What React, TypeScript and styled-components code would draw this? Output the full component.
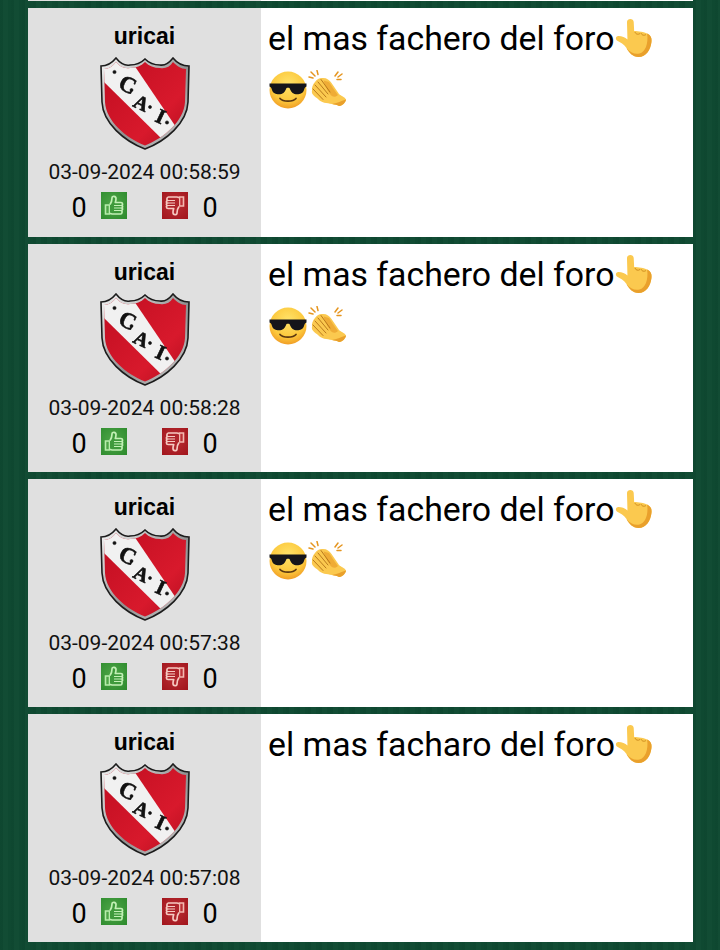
import { createGlobalStyle, styled } from "styled-components";

const GlobalStyle = createGlobalStyle`
  html, body {
    margin: 0;
    padding: 0;
    background-color: #0f4a32;
  }
`;

const Page = styled.div`
  width: 720px;
  height: 950px;
  overflow: hidden;
  box-sizing: border-box;
  padding: 0 27px 0 28px;
  display: flex;
  flex-direction: column;
  gap: 7px;
  background-color: #0f4a32;
  background-image: repeating-linear-gradient(90deg, rgba(0, 0, 0, 0.035) 0 3px, rgba(255, 255, 255, 0.012) 3px 8px, rgba(0, 0, 0, 0.015) 8px 11px);
  font-family: Roboto, "Liberation Sans", sans-serif;
  color: #000;
`;

const PrevCardEdge = styled.div`
  height: 1px;
  flex: none;
  background: linear-gradient(90deg, #e0e0e0 233px, #fff 233px);
`;

const Card = styled.article`
  flex: none;
  height: 228px;
  display: flex;
  background: #fff;

  &:nth-child(2) {
    height: 229px;
  }
`;

const Author = styled.aside`
  width: 233px;
  flex: none;
  box-sizing: border-box;
  padding-top: 16px;
  display: flex;
  flex-direction: column;
  align-items: center;
  background: #e0e0e0;
`;

const Username = styled.div`
  font-family: "Liberation Sans", Arial, sans-serif;
  font-size: 23px;
  font-weight: 700;
  line-height: 25px;
`;

const Crest = styled.svg`
  display: block;
  margin-top: 8px;
  width: 90px;
  height: 93px;
  filter: blur(0.35px);
`;

const Stamp = styled.div`
  margin-top: 9px;
  font-size: 21px;
  line-height: 27px;
  color: #111;
`;

const Votes = styled.div`
  margin-top: 7px;
  display: flex;
  align-items: center;
  gap: 14px;
`;

const Count = styled.span`
  font-size: 27px;
  line-height: 30px;
  width: 16px;
  text-align: center;
`;

const VoteGap = styled.span`
  width: 7px;
`;

const VoteTile = styled.svg`
  display: block;
  width: 26px;
  height: 27px;
  margin-top: -5px;
  filter: blur(0.4px);
`;

const Message = styled.div`
  flex: 1;
  box-sizing: border-box;
  padding: 5px 7px 0;
  font-size: 33.8px;
  line-height: 52px;
`;

const Emoji = styled.svg`
  display: inline-block;
  width: 40px;
  height: 40px;
  vertical-align: -8px;
`;

const Crest1 = () => (
  <Crest viewBox="0 0 90 93">
    <defs>
      <linearGradient id="silver" x1="0" y1="0" x2="1" y2="1">
        <stop offset="0" stopColor="#f6f6f6" />
        <stop offset="0.55" stopColor="#8f8f8f" />
        <stop offset="1" stopColor="#cfcfcf" />
      </linearGradient>
      <linearGradient id="crestRed" x1="0" y1="0" x2="1" y2="1">
        <stop offset="0" stopColor="#bf0d20" />
        <stop offset="0.65" stopColor="#d8192c" />
        <stop offset="1" stopColor="#ae0c1d" />
      </linearGradient>
      <clipPath id="crestInner">
        <path d="M4 12C9 12 13 9 16 5C20 10 25 12 30 11C36 11 41 9 45 5C49 9 54 11 60 11C65 12 70 10 73 5C77 9 81 12 86 12L85 45C84 64 64 81 45 88.5C26 81 6 64 5 45Z" />
      </clipPath>
    </defs>
    <path
      d="M1 9C7 9 12 6 16 1C20 6 25 9 30 8C35 8 41 6 45 2C49 6 55 8 60 8C65 9 69 6 73 1C77 6 83 9 89 9L88 45C87 66 66 84 45 92C24 84 3 66 2 45Z"
      fill="url(#silver)"
      stroke="#1c1c1c"
      strokeWidth="1.6"
    />
    <g clipPath="url(#crestInner)">
      <rect width="90" height="93" fill="url(#crestRed)" />
      <path d="M-4 14L14 -4L34 8L78 73L66 86L4 25Z" fill="#f1f1f1" />
    </g>
    <g fontFamily="'Liberation Serif', serif" fontWeight="700" fill="#111" stroke="#111" strokeWidth="0.6">
      <text x="17" y="31" fontSize="23" transform="rotate(25 17 31)">C</text>
      <text x="32" y="49" fontSize="20" transform="rotate(25 32 49)">A</text>
      <text x="54" y="64" fontSize="21" transform="rotate(25 54 64)">I</text>
      <circle cx="14.5" cy="15" r="1.6" />
      <circle cx="31.5" cy="33" r="1.5" />
      <circle cx="50" cy="50" r="1.5" />
      <circle cx="67" cy="65.5" r="1.6" />
    </g>
  </Crest>
);

const ThumbUp = () => (
  <VoteTile viewBox="0 0 26 27">
    <defs>
      <radialGradient id="upBg" cx="0.45" cy="0.45" r="0.75">
        <stop offset="0" stopColor="#4fa548" />
        <stop offset="1" stopColor="#2d8b2d" />
      </radialGradient>
    </defs>
    <rect width="26" height="27" fill="url(#upBg)" />
    <path d="M4.5 13H8.5V22H4.5Z" fill="#4fa548" stroke="#b7ecab" strokeWidth="1.6" />
    <path
      d="M9 12.5C10.5 10.5 11 8 11 6C11 3.5 15 3.8 15 6.5C15 8.5 14.5 9.5 14.3 10.5H20C22 10.5 22 13.5 20.5 13.5C22 13.5 22 16 20.5 16C22 16 22 18.5 20.2 18.5C21.5 18.5 21.5 22 19.5 22H11C10 22 9.5 21.5 9 21.2"
      fill="#3f9a3c"
      stroke="#c2f0b5"
      strokeWidth="1.7"
      strokeLinejoin="round"
    />
    <path d="M13 13.5H20M13 16H20M13 18.5H20" stroke="#c2f0b5" strokeWidth="1.1" />
  </VoteTile>
);

const ThumbDown = () => (
  <VoteTile viewBox="0 0 26 27">
    <defs>
      <radialGradient id="downBg" cx="0.5" cy="0.45" r="0.75">
        <stop offset="0" stopColor="#bb3036" />
        <stop offset="1" stopColor="#a0141b" />
      </radialGradient>
    </defs>
    <rect width="26" height="27" fill="url(#downBg)" />
    <path d="M21.5 14H17.5V5H21.5Z" fill="#bb3036" stroke="#f3b8b0" strokeWidth="1.6" />
    <path
      d="M17 14.5C15.5 16.5 15 19 15 21C15 23.5 11 23.2 11 20.5C11 18.5 11.5 17.5 11.7 16.5H6C4 16.5 4 13.5 5.5 13.5C4 13.5 4 11 5.5 11C4 11 4 8.5 5.8 8.5C4.5 8.5 4.5 5 6.5 5H15C16 5 16.5 5.5 17 5.8"
      fill="#b0262c"
      stroke="#f6c9c1"
      strokeWidth="1.7"
      strokeLinejoin="round"
    />
    <path d="M6 8.5H13M6 11H13M6 13.5H13" stroke="#f6c9c1" strokeWidth="1.1" />
  </VoteTile>
);

const skin = "#fbc94f";
const skinDark = "#e9a02c";

const PointUp = () => (
  <Emoji viewBox="1 0 40 40">
    <path
      d="M13 4C13 0 20 0 20 4L20.5 13C25 13 31 14 34 15.5C38 17.5 39 20 38.5 24C37.5 32 33 39 25 39C19 39 15 34.5 12.5 30C10 26 6 24.5 2.5 22.5C0.5 21 1.5 18 4 18C8 18 11 19.5 13.5 21.5Z"
      fill={skin}
      transform="translate(0.5 0) scale(0.96 1)"
    />
    <path
      d="M34 15.5C38 17.5 39 20 38.5 24C37.5 32 33 39 25 39C19 39 15 34.5 12.5 30C16 34.5 21 36.5 26 35.5C32 34 35.5 26 34 15.5Z"
      fill={skinDark}
      transform="translate(0.5 0) scale(0.96 1)"
    />
    <path d="M21 14C21.5 16 24 17 26 15.5M27 15C27.5 17 30 18 32 16.5" fill="none" stroke="#c98618" strokeWidth="0.9" />
  </Emoji>
);

const CoolFace = () => (
  <Emoji viewBox="0 0 40 40">
    <defs>
      <radialGradient id="coolBg" cx="0.5" cy="0.35" r="0.7">
        <stop offset="0" stopColor="#ffe36a" />
        <stop offset="0.65" stopColor="#fcc83c" />
        <stop offset="1" stopColor="#ee9320" />
      </radialGradient>
    </defs>
    <circle cx="20" cy="20" r="18.5" fill="url(#coolBg)" />
    <path
      d="M1.5 13.5H38.5V16.5C37 17 36.5 18 36 20C35 24 30 25 26.5 24C23.5 23 22.5 20 21.5 18C20.5 17.5 19.5 17.5 18.5 18C17.5 20 16.5 23 13.5 24C10 25 5 24 4 20C3.5 18 3 17 1.5 16.5Z"
      fill="#15151a"
    />
    <path d="M12 28.5C15 32 25 32 28 28.5" fill="none" stroke="#5b3710" strokeWidth="1.7" strokeLinecap="round" />
  </Emoji>
);

const Clap = () => (
  <Emoji viewBox="0 0 40 40">
    <path d="M3 2L7 6M9 0.5L10 4.5M1 7L5 8M30 2L27 6M34 4L30 7M33 9.5L29 9.5" stroke="#e5951f" strokeWidth="1.5" strokeLinecap="round" />
    <path
      d="M7 12C9 9 12 7.5 15 8C19 8 21.5 10 23.5 13L31 24C33 26 37 27 38 29.5C38 32 34 36.5 31 36C29 35 27 34.5 24 34C19 33 13 33 10 29C7 26.5 3 24.5 4 20.5C3.5 17.5 5 14 7 12Z"
      fill={skin}
    />
    <path
      d="M21 12C23 15 26 20 30 25C27 28 24 27 22 24C19 20 17 16 15.5 10.5"
      fill={skinDark}
      opacity="0.7"
    />
    <path
      d="M10 12L20 24M7 15L18 27M5 19L15 29.5M13 9.5L22 22"
      fill="none"
      stroke="#b9791c"
      strokeWidth="1"
      strokeLinecap="round"
    />
    <path d="M24 34C28 33.5 33 31 38 29.5C38 32 34 36.5 31 36C29 35 27 34.5 24 34Z" fill={skinDark} />
  </Emoji>
);

const posts = [
  { stamp: "03-09-2024 00:58:59", text: "el mas fachero del foro", extra: true },
  { stamp: "03-09-2024 00:58:28", text: "el mas fachero del foro", extra: true },
  { stamp: "03-09-2024 00:57:38", text: "el mas fachero del foro", extra: true },
  { stamp: "03-09-2024 00:57:08", text: "el mas facharo del foro", extra: false },
];

export default function App() {
  return (
    <>
      <GlobalStyle />
      <Page>
        <PrevCardEdge />
        {posts.map((post) => (
          <Card key={post.stamp}>
            <Author>
              <Username>uricai</Username>
              <Crest1 />
              <Stamp>{post.stamp}</Stamp>
              <Votes>
                <Count>0</Count>
                <ThumbUp />
                <VoteGap />
                <ThumbDown />
                <Count>0</Count>
              </Votes>
            </Author>
            <Message>
              {post.text}
              <PointUp />
              {post.extra && (
                <>
                  {" "}
                  <CoolFace />
                  <Clap />
                </>
              )}
            </Message>
          </Card>
        ))}
      </Page>
    </>
  );
}
